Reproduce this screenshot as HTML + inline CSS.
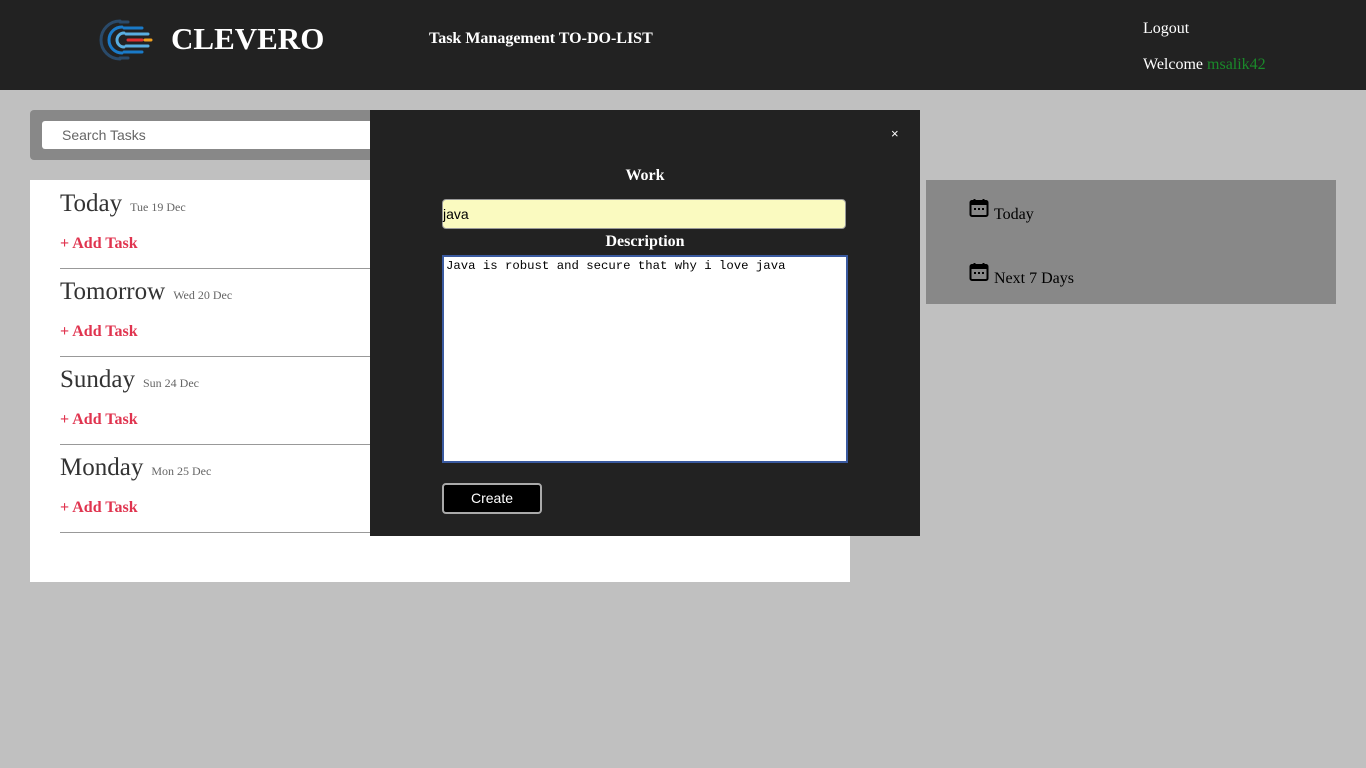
<!DOCTYPE html>
<html><head><style>
body{margin:0;width:1366px;height:768px;background:#c0c0c0;font-family:"Liberation Serif",serif;position:relative;overflow:hidden}
.hdr{position:absolute;left:0;top:0;width:1366px;height:90px;background:#222}
.abs{position:absolute}
.day{position:absolute;left:60px;width:790px}
.day .t{font-size:25px;color:#333}
.day .d{font-size:12px;color:#666;margin-left:8px}
.add{position:absolute;font-weight:bold;color:#e0344f;font-size:16px}
.hr{position:absolute;left:60px;width:790px;height:1px;background:#999}
</style></head><body>
<div class="hdr">
<svg class="abs" style="left:98px;top:18px" width="56" height="44" viewBox="0 0 56 44">
<g fill="none" stroke-linecap="round">
<path d="M22 3 A19 19 0 0 0 22 41" stroke="#2a4a6a" stroke-width="3"/>
<path d="M24 9 A13 13 0 0 0 24 35" stroke="#1a7ac8" stroke-width="3"/>
<path d="M26 15 A7 7 0 0 0 26 29" stroke="#5aaee0" stroke-width="3"/>
</g>
<g stroke-width="3" stroke-linecap="round">
<line x1="22" y1="4" x2="30" y2="4" stroke="#2a4a6a"/>
<line x1="26" y1="10" x2="44" y2="10" stroke="#1a7ac8"/>
<line x1="28" y1="16" x2="50" y2="16" stroke="#5aaee0"/>
<line x1="30" y1="22" x2="44" y2="22" stroke="#e03030"/>
<line x1="47" y1="22" x2="53" y2="22" stroke="#f0a020"/>
<line x1="28" y1="28" x2="50" y2="28" stroke="#5aaee0"/>
<line x1="26" y1="34" x2="44" y2="34" stroke="#1a7ac8"/>
<line x1="22" y1="40" x2="30" y2="40" stroke="#2a4a6a"/>
</g></svg>
<div class="abs" style="left:171px;top:21px;font-size:31px;font-weight:bold;color:#fff">CLEVERO</div>
<div class="abs" style="left:429px;top:30px;font-size:16px;font-weight:bold;color:#fff">Task Management TO-DO-LIST</div>
<div class="abs" style="left:1143px;top:20px;font-size:16px;color:#fff">Logout</div>
<div class="abs" style="left:1143px;top:56px;font-size:16px;color:#fff">Welcome <span style="color:#1a8a2a">msalik42</span></div>
</div>
<div class="abs" style="left:30px;top:110px;width:400px;height:50px;background:#888;border-radius:4px"></div>
<div class="abs" style="left:42px;top:121px;width:360px;height:28px;background:#fff;border-radius:3px;font-family:'Liberation Sans',sans-serif;font-size:14px;color:#666;line-height:28px;text-indent:20px">Search Tasks</div>
<div class="abs" style="left:30px;top:180px;width:820px;height:402px;background:#fff"></div>
<div class="day" style="top:190px"><span class="t">Today</span><span class="d">Tue 19 Dec</span></div>
<div class="add" style="left:60px;top:235px">+ Add Task</div><div class="hr" style="top:268px"></div>
<div class="day" style="top:278px"><span class="t">Tomorrow</span><span class="d">Wed 20 Dec</span></div>
<div class="add" style="left:60px;top:323px">+ Add Task</div><div class="hr" style="top:356px"></div>
<div class="day" style="top:366px"><span class="t">Sunday</span><span class="d">Sun 24 Dec</span></div>
<div class="add" style="left:60px;top:411px">+ Add Task</div><div class="hr" style="top:444px"></div>
<div class="day" style="top:454px"><span class="t">Monday</span><span class="d">Mon 25 Dec</span></div>
<div class="add" style="left:60px;top:499px">+ Add Task</div><div class="hr" style="top:532px"></div>
<div class="abs" style="left:926px;top:180px;width:410px;height:124px;background:#888"></div>
<svg class="abs" style="left:969px;top:198px" width="20" height="20" viewBox="0 0 20 20"><rect x="1.5" y="3" width="17" height="15" rx="1.5" fill="none" stroke="#000" stroke-width="2"/><rect x="1.5" y="3" width="17" height="4" fill="#000"/><line x1="5.5" y1="1" x2="5.5" y2="4" stroke="#000" stroke-width="2"/><line x1="14.5" y1="1" x2="14.5" y2="4" stroke="#000" stroke-width="2"/><rect x="5" y="10" width="2" height="2"/><rect x="9" y="10" width="2" height="2"/><rect x="13" y="10" width="2" height="2"/></svg>
<div class="abs" style="left:994px;top:206px;font-size:16px">Today</div>
<svg class="abs" style="left:969px;top:262px" width="20" height="20" viewBox="0 0 20 20"><rect x="1.5" y="3" width="17" height="15" rx="1.5" fill="none" stroke="#000" stroke-width="2"/><rect x="1.5" y="3" width="17" height="4" fill="#000"/><line x1="5.5" y1="1" x2="5.5" y2="4" stroke="#000" stroke-width="2"/><line x1="14.5" y1="1" x2="14.5" y2="4" stroke="#000" stroke-width="2"/><rect x="5" y="10" width="2" height="2"/><rect x="9" y="10" width="2" height="2"/><rect x="13" y="10" width="2" height="2"/></svg>
<div class="abs" style="left:994px;top:270px;font-size:16px">Next 7 Days</div>
<div class="abs" style="left:370px;top:110px;width:550px;height:426px;background:#222"></div>
<div class="abs" style="left:891px;top:126px;color:#fff;font-family:'Liberation Sans',sans-serif;font-size:13px">×</div>
<div class="abs" style="left:370px;top:167px;width:550px;text-align:center;color:#fff;font-weight:bold;font-size:16px">Work</div>
<div class="abs" style="left:442px;top:199px;width:402px;height:28px;background:#fafac0;border:1px solid #999;border-radius:4px;font-family:'Liberation Sans',sans-serif;font-size:14px;line-height:28px">java</div>
<div class="abs" style="left:370px;top:233px;width:550px;text-align:center;color:#fff;font-weight:bold;font-size:16px">Description</div>
<div class="abs" style="left:442px;top:255px;width:398px;height:200px;background:#fff;border:2px solid #3a5aa0;font-family:'Liberation Mono',monospace;font-size:12.3px;padding:2px">Java is robust and secure that why i love java</div>
<div class="abs" style="left:442px;top:483px;width:96px;height:27px;background:#000;border:2px solid #aaa;border-radius:4px;color:#fff;text-align:center;line-height:27px;font-family:'Liberation Sans',sans-serif;font-size:14px">Create</div>
</body></html>
